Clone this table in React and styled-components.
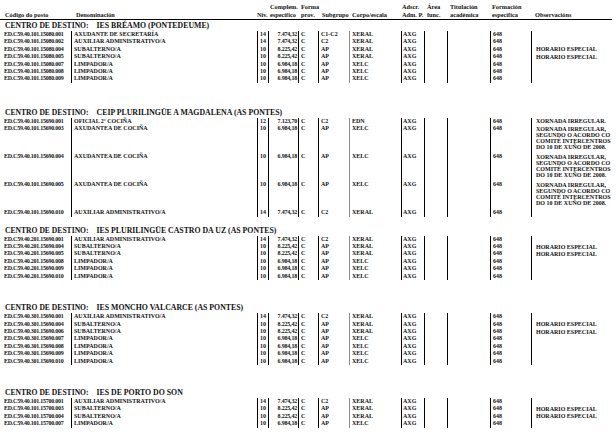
import styled, { createGlobalStyle } from "styled-components";

const GlobalStyle = createGlobalStyle`
  body {
    margin: 0;
    background: #fff;
  }
`;

const COLS = "71px 186px 11px 30px 20px 31px 52px 23px 23px 43px 41px 1fr";

const ESP = "HORARIO ESPECIAL";
const IRR = [
  "XORNADA IRREGULAR,",
  "SEGUNDO O ACORDO CO",
  "COMITÉ INTERCENTROS",
  "DO 10 DE XUÑO DE 2008.",
];

const AUX = ["AUXILIAR ADMINISTRATIVO/A", "14", "7.474,32", "C2", "XERAL"];
const SUB = ["SUBALTERNO/A", "10", "8.225,42", "AP", "XERAL"];
const LIM = ["LIMPADOR/A", "10", "6.984,18", "AP", "XELC"];
const COC = ["AXUDANTEA DE COCIÑA", "10", "6.984,18", "AP", "XELC"];

const row = (code, [name, niv, comp, sub, corpo], obs = []) => ({
  code,
  name,
  niv,
  comp,
  sub,
  corpo,
  obs: Array.isArray(obs) ? obs : [obs],
});

const sections = [
  {
    name: "IES BRÉAMO (PONTEDEUME)",
    gap: 24,
    rows: [
      row("ED.C59.40.101.15080.001", ["AXUDANTE DE SECRETARÍA", "14", "7.474,32", "C1-C2", "XERAL"]),
      row("ED.C59.40.101.15080.002", AUX),
      row("ED.C59.40.101.15080.004", SUB, ESP),
      row("ED.C59.40.101.15080.005", SUB, ESP),
      row("ED.C59.40.101.15080.007", LIM),
      row("ED.C59.40.101.15080.008", LIM),
      row("ED.C59.40.101.15080.009", LIM),
    ],
  },
  {
    name: "CEIP PLURILINGÜE A MAGDALENA (AS PONTES)",
    gap: 8,
    rows: [
      row("ED.C59.40.101.15690.001", ["OFICIAL 2ª COCIÑA", "12", "7.123,70", "C2", "EDN"], "XORNADA IRREGULAR."),
      row("ED.C59.40.101.15690.003", COC, IRR),
      row("ED.C59.40.101.15690.004", COC, IRR),
      row("ED.C59.40.101.15690.005", COC, IRR),
      row("ED.C59.40.101.15690.010", AUX),
    ],
  },
  {
    name: "IES PLURILINGÜE CASTRO DA UZ (AS PONTES)",
    gap: 22,
    rows: [
      row("ED.C59.40.201.15690.001", AUX),
      row("ED.C59.40.201.15690.004", SUB, ESP),
      row("ED.C59.40.201.15690.005", SUB, ESP),
      row("ED.C59.40.201.15690.008", LIM),
      row("ED.C59.40.201.15690.009", LIM),
      row("ED.C59.40.201.15690.010", LIM),
    ],
  },
  {
    name: "IES MONCHO VALCARCE (AS PONTES)",
    gap: 22,
    rows: [
      row("ED.C59.40.301.15690.001", AUX),
      row("ED.C59.40.301.15690.004", SUB, ESP),
      row("ED.C59.40.301.15690.006", SUB, ESP),
      row("ED.C59.40.301.15690.007", LIM),
      row("ED.C59.40.301.15690.008", LIM),
      row("ED.C59.40.301.15690.009", LIM),
      row("ED.C59.40.301.15690.010", LIM),
    ],
  },
  {
    name: "IES DE PORTO DO SON",
    gap: 0,
    rows: [
      row("ED.C59.40.101.15700.001", AUX),
      row("ED.C59.40.101.15700.003", SUB, ESP),
      row("ED.C59.40.101.15700.004", SUB, ESP),
      row("ED.C59.40.101.15700.007", LIM),
    ],
  },
];

const App = () => {
  return (
    <Page>
      <GlobalStyle />
      <Header>
        <HeadCell $pad={5}>Código do posto</HeadCell>
        <HeadCell $pad={5}>Denominación</HeadCell>
        <HeadCell $pad={0}>Niv.</HeadCell>
        <HeadCell $pad={2}>
          <span>Complem.</span>
          <span>específico</span>
        </HeadCell>
        <HeadCell $pad={3}>
          <span>Forma</span>
          <span>prov.</span>
        </HeadCell>
        <HeadCell $pad={4}>Subgrupo</HeadCell>
        <HeadCell $pad={3}>Corpo/escala</HeadCell>
        <HeadCell $pad={1}>
          <span>Adscr.</span>
          <span>Adm. P.</span>
        </HeadCell>
        <HeadCell $pad={3}>
          <span>Área</span>
          <span>func.</span>
        </HeadCell>
        <HeadCell $pad={3}>
          <span>Titulación</span>
          <span>académica</span>
        </HeadCell>
        <HeadCell $pad={2}>
          <span>Formación</span>
          <span>específica</span>
        </HeadCell>
        <HeadCell $pad={4}>Observacións</HeadCell>
      </Header>

      {sections.map((s) => (
        <Section key={s.name} $gap={s.gap}>
          <Heading>
            CENTRO DE DESTINO:<CentreName>{s.name}</CentreName>
          </Heading>
          <Rows>
            {s.rows.map((r) => (
              <Row key={r.code}>
                <CodeCell>{r.code}</CodeCell>
                <Cell $line $pad={2}>{r.name}</Cell>
                <Cell $line $align="center">{r.niv}</Cell>
                <NumCell>{r.comp}</NumCell>
                <Cell $line $pad={2}>C</Cell>
                <Cell $line $pad={2}>{r.sub}</Cell>
                <Cell $line="grey" $pad={2}>{r.corpo}</Cell>
                <Cell $line $pad={1}>AXG</Cell>
                <Cell $line />
                <Cell $line />
                <Cell $line $pad={2}>648</Cell>
                <ObsCell>
                  {r.obs.map((o) => (
                    <div key={o}>{o}</div>
                  ))}
                </ObsCell>
              </Row>
            ))}
          </Rows>
        </Section>
      ))}
    </Page>
  );
};

export default App;

const Page = styled.div`
  width: 616px;
  height: 439px;
  overflow: hidden;
  font-family: "Liberation Serif", "Times New Roman", serif;
  font-weight: bold;
  color: #111;
`;

const Header = styled.div`
  display: grid;
  grid-template-columns: ${COLS};
  align-items: end;
  height: 18px;
  padding-bottom: 1px;
  margin-right: 4px;
  border-bottom: 1px solid #000;
  font-size: 6.3px;
`;

const HeadCell = styled.div`
  display: flex;
  flex-direction: column;
  padding-left: ${(p) => p.$pad}px;
  line-height: 7.5px;
  white-space: nowrap;
`;

const Section = styled.div`
  margin-bottom: ${(p) => p.$gap}px;
`;

const Heading = styled.div`
  height: 11px;
  line-height: 11px;
  padding-left: 5px;
  font-size: 7.6px;
  white-space: nowrap;
`;

const CentreName = styled.span`
  margin-left: 8px;
  font-size: 7.8px;
`;

const Rows = styled.div`
  display: flex;
  flex-direction: column;
`;

const Row = styled.div`
  display: grid;
  grid-template-columns: ${COLS};
  align-items: stretch;
  min-height: 7.4px;
  font-size: 6px;
`;

const Cell = styled.div`
  line-height: 7.4px;
  white-space: nowrap;
  padding-left: ${(p) => p.$pad || 0}px;
  text-align: ${(p) => p.$align || "left"};
  border-left: ${(p) =>
    p.$line === "grey" ? "1.5px solid #8a8a8a" : p.$line ? "1px solid #000" : "none"};
`;

const CodeCell = styled.div`
  line-height: 7.4px;
  white-space: nowrap;
  padding-left: 4px;
  letter-spacing: -0.25px;
`;

const NumCell = styled.div`
  line-height: 7.4px;
  white-space: nowrap;
  text-align: right;
  padding-right: 1px;
  letter-spacing: -0.2px;
  border-left: 1px solid #000;
`;

const ObsCell = styled.div`
  border-left: 1.5px solid #000;
  padding: 0.6px 0 0 4px;
  line-height: 6.2px;
  white-space: nowrap;

  & > div:nth-child(4) {
    margin-bottom: 2.6px;
  }
`;
